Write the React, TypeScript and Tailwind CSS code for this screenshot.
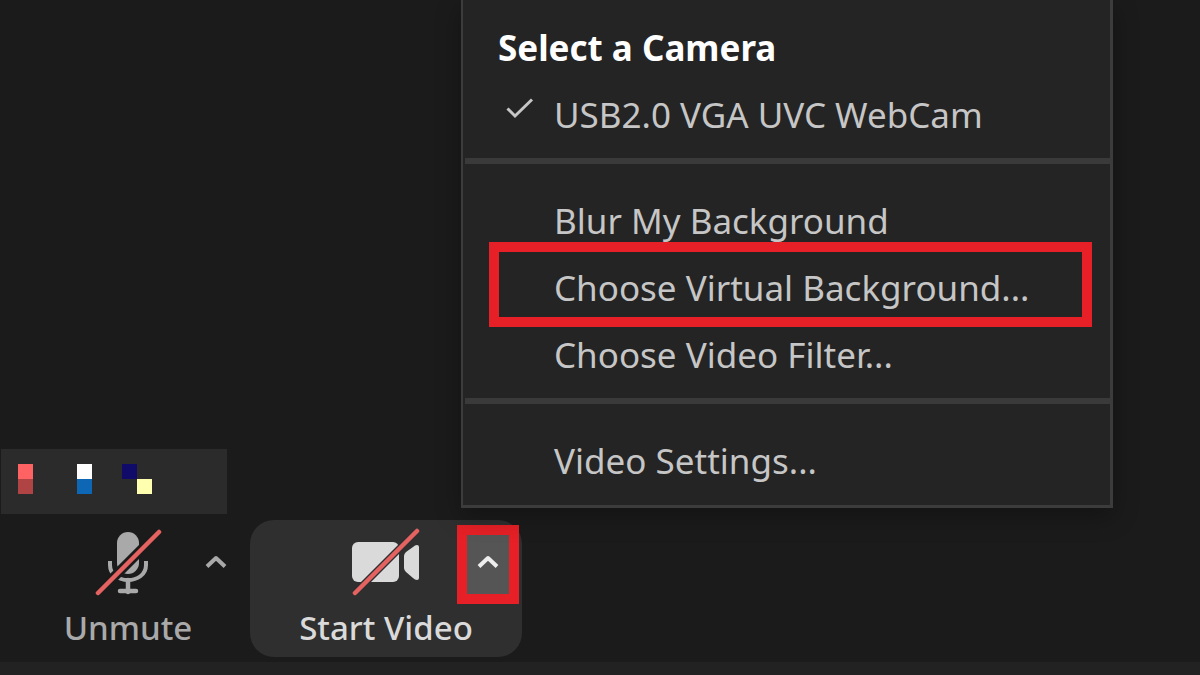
import { Fragment } from 'react';
import clsx from 'clsx';

type MenuItem = {
  label: string;
  checked?: boolean;
  highlighted?: boolean;
};

const MENU_GROUPS: { title?: string; items: MenuItem[] }[] = [
  { title: 'Select a Camera', items: [{ label: 'USB2.0 VGA UVC WebCam', checked: true }] },
  {
    items: [
      { label: 'Blur My Background' },
      { label: 'Choose Virtual Background...', highlighted: true },
      { label: 'Choose Video Filter...' },
    ],
  },
  { items: [{ label: 'Video Settings...' }] },
];

export default function App() {
  return (
    <main className="flex min-h-screen flex-col justify-end overflow-hidden bg-[#1b1b1b] font-['Noto_Sans','Open_Sans',sans-serif]">
      <PixelStrip />
      <div className="flex items-stretch pt-1.5 pb-[5px]">
        <div className="flex w-[250px] shrink-0 items-start pl-[60px] text-[#a9a9a9]">
          <button type="button" className="flex w-[136px] flex-col items-center pt-2">
            <MicOffIcon />
            <span className="text-[33px] leading-[56px] font-medium whitespace-nowrap">Unmute</span>
          </button>
          <button type="button" aria-label="Audio options" className="mt-[34px] ml-2">
            <Chevron />
          </button>
        </div>

        <div className="relative flex h-[137px] w-[272px] shrink-0 items-start rounded-[24px] bg-[#2f2f2f] text-[#dadada]">
          <button type="button" className="flex w-full flex-col items-center pt-2">
            <VideoOffIcon />
            <span className="text-[33px] leading-[56px] font-medium whitespace-nowrap">Start Video</span>
          </button>
          <button
            type="button"
            aria-label="Video options"
            aria-haspopup="menu"
            className="absolute top-[5px] right-[3px] flex h-[79px] w-[62px] items-start justify-center border-10 border-[#e62026] bg-[#555555] pt-[19px] text-[#eeeeee]"
          >
            <Chevron />
          </button>
          <CameraMenu />
        </div>
      </div>
      <div className="h-[13px] bg-[#222222]" />
    </main>
  );
}

function CameraMenu() {
  return (
    <div
      role="menu"
      className="absolute bottom-full left-[211px] mb-3 w-[652px] border-r-3 border-b-3 border-l-2 border-[#3c3c3c] bg-[#242424] pt-3.5 pb-[11px] shadow-[0_8px_24px_rgba(0,0,0,0.3)]"
    >
      {MENU_GROUPS.map((group, i) => (
        <Fragment key={i}>
          {i > 0 && <hr className="mt-2.5 mb-[23px] ml-0.5 h-1.5 border-0 bg-[#3a3a3a]" />}
          {group.title && (
            <h2 className="pl-[35px] text-[35px] leading-[67px] font-bold whitespace-nowrap text-white">{group.title}</h2>
          )}
          {group.items.map((item) => (
            <MenuRow key={item.label} {...item} />
          ))}
        </Fragment>
      ))}
    </div>
  );
}

function MenuRow({ label, checked, highlighted }: MenuItem) {
  return (
    <button
      type="button"
      role={checked ? 'menuitemradio' : 'menuitem'}
      aria-checked={checked}
      className="relative flex w-full text-left text-[35px] leading-[67px] whitespace-nowrap text-[#c6c6c6]"
    >
      <span className="flex w-[91px] shrink-0 pt-4 pl-[43px]">{checked && <CheckIcon />}</span>
      {label}
      <span
        className={clsx('absolute -top-3 right-[18px] -bottom-1.5 left-[26px] border-10 border-[#e62026]', !highlighted && 'hidden')}
      />
    </button>
  );
}

/* Small blocks of colour shown above the audio controls. */
function PixelStrip() {
  return (
    <div className="ml-px flex h-[65px] w-[226px] items-start bg-[#2b2b2b] pt-[15px] pl-[17px]">
      <div className="mr-11">
        <div className="size-[15px] bg-[#ff6262]" />
        <div className="size-[15px] bg-[#b04444]" />
      </div>
      <div className="mr-[30px]">
        <div className="size-[15px] bg-white" />
        <div className="size-[15px] bg-[#0d67b5]" />
      </div>
      <div className="size-[15px] bg-[#100a68]" />
      <div className="mt-[15px] size-[15px] bg-[#ffffb0]" />
    </div>
  );
}

function Chevron() {
  return (
    <svg width="24" height="16" viewBox="0 0 24 16" fill="none" stroke="currentColor" strokeWidth="4" aria-hidden>
      <path d="M3 12.500 12 4l9 8.500" strokeLinejoin="round" />
    </svg>
  );
}

function CheckIcon() {
  return (
    <svg width="28" height="24" viewBox="0 0 28 24" fill="none" stroke="currentColor" strokeWidth="3" aria-hidden>
      <path d="m1.500 11.500 7.500 7.500L26 2.500" />
    </svg>
  );
}

function MicOffIcon() {
  return (
    <svg width="68" height="72" viewBox="0 0 68 72" fill="none" aria-hidden>
      <rect x="23" y="4" width="22" height="42" rx="11" fill="currentColor" />
      <path d="M16 33v4C16 57 52 57 52 37v-4" stroke="currentColor" strokeWidth="4" />
      <path d="M34 52v12M26 63h16" stroke="currentColor" strokeWidth="4.500" strokeLinecap="round" />
      <path d="M4 65 65 4" stroke="#1b1b1b" strokeWidth="10" />
      <path d="M4 65 65 4" stroke="#e4625f" strokeWidth="4.500" strokeLinecap="round" />
    </svg>
  );
}

function VideoOffIcon() {
  return (
    <svg width="68" height="72" viewBox="0 0 68 72" fill="none" aria-hidden>
      <rect x="0" y="14" width="47" height="40" rx="6" fill="currentColor" />
      <path d="M52 28q0-2 2-4l7-5q2-2 4-2 2 0 2 2v31q0 2-2 2-2 0-4-2l-7-6q-2-2-2-4Z" fill="currentColor" />
      <path d="M3 65 65 3" stroke="#2f2f2f" strokeWidth="7" />
      <path d="M3 65 65 3" stroke="#e4625f" strokeWidth="4.500" strokeLinecap="round" />
    </svg>
  );
}
